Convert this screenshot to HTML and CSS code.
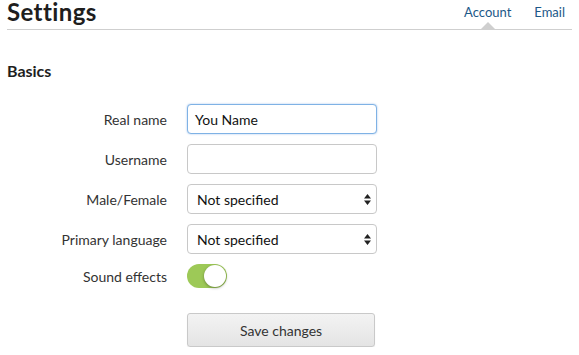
FILE: index.html
```
<!DOCTYPE html>
<html>
<head>
<meta charset="utf-8">
<link rel="stylesheet" href="styles.css">
</head>
<body>
<div class="page">
  <header class="header">
    <h1 class="title">Settings</h1>
    <nav class="tabs">
      <a class="tab active">Account</a>
      <a class="tab">Email</a>
    </nav>
  </header>
  <h2 class="section">Basics</h2>
  <form class="form">
    <label class="label">Real name</label>
    <div class="input focus">You Name</div>
    <label class="label">Username</label>
    <div class="input"></div>
    <label class="label">Male/Female</label>
    <div class="input select"><span>Not specified</span>
      <svg class="arrows" width="7" height="11" viewBox="0 0 7 11"><path d="M3.5 0L7 4.5H0z M3.5 11L0 6.5H7z" fill="#222"/></svg>
    </div>
    <label class="label">Primary language</label>
    <div class="input select"><span>Not specified</span>
      <svg class="arrows" width="7" height="11" viewBox="0 0 7 11"><path d="M3.5 0L7 4.5H0z M3.5 11L0 6.5H7z" fill="#222"/></svg>
    </div>
    <label class="label">Sound effects</label>
    <div class="toggle-cell"><div class="toggle"><div class="knob"></div></div></div>
    <div></div>
    <div class="button-cell"><button type="button" class="button">Save changes</button></div>
  </form>
</div>
</body>
</html>
```
FILE: styles.css
```
* { box-sizing: border-box; }
html, body { margin: 0; padding: 0; background: #fff; }
body { font-family: Lato, "Liberation Sans", sans-serif; color: #333; }
.page { padding: 0 7px; width: 579px; }
.header {
  display: flex; justify-content: space-between; align-items: flex-end;
  height: 30px; border-bottom: 1px solid #cfcfcf;
}
.title { margin: 0; font-size: 24px; font-weight: 700; color: #1e1e1e; line-height: 23px; padding-bottom: 6px; letter-spacing: 0.4px; }
.tabs { display: flex; gap: 23px; padding-right: 7px; }
.tab { position: relative; font-size: 13px; color: #1c5888; line-height: 16px; padding-bottom: 9px; }
.tab.active::after {
  content: ""; position: absolute; left: 50%; margin-left: -7px; bottom: 0;
  border-left: 7px solid transparent; border-right: 7px solid transparent;
  border-bottom: 7px solid #cfcfcf;
}
.section { margin: 31px 0 0; font-size: 16px; font-weight: 700; color: #1e1e1e; line-height: 20px; }
.form {
  display: grid; grid-template-columns: 160px 190px; column-gap: 20px; row-gap: 10px;
  margin-top: 23px; align-items: center;
}
.label { text-align: right; font-size: 14px; color: #333; }
.input {
  height: 30px; border: 1px solid #c8c8c8; border-radius: 4px; background: #fff;
  font-size: 14px; color: #111; padding: 0 7px; display: flex; align-items: center;
}
.input.focus { border-color: #7fb2e5; box-shadow: 0 0 2px rgba(90,150,220,0.6); }
.select { justify-content: space-between; padding: 0 5px 0 9px; }
.toggle-cell { height: 24px; }
.toggle { width: 40px; height: 24px; border-radius: 12px; background: #9dc957; position: relative; }
.knob {
  position: absolute; right: 1px; top: 1px; width: 22px; height: 22px; border-radius: 50%;
  background: #fff; box-shadow: 0 1px 3px rgba(0,0,0,0.35);
}
.button-cell { padding-top: 15px; }
.button {
  width: 188px; height: 34px; border: 1px solid #c9c9c9; border-radius: 3px;
  background: linear-gradient(#f3f3f3, #e4e4e4); font-family: Lato, "Liberation Sans", sans-serif;
  font-size: 14px; color: #333; box-shadow: 0 1px 1px rgba(0,0,0,0.08);
}
```
